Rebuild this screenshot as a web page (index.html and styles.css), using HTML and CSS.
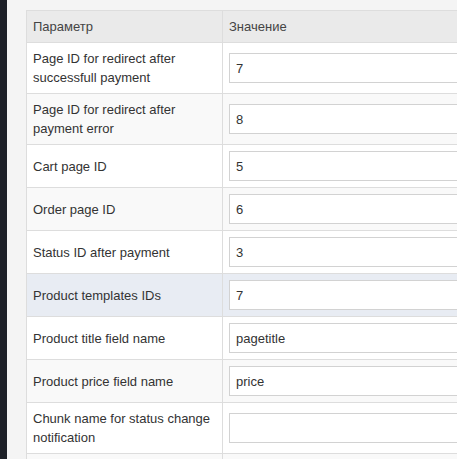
FILE: index.html
```html
<!DOCTYPE html>
<html lang="ru">
<head>
    <meta charset="UTF-8">
    <meta name="viewport" content="width=device-width, initial-scale=1.0">
    <title>Настройки модуля</title>
    <link rel="stylesheet" href="styles.css">
</head>
<body>

    <div class="sidebar"></div>

    <main class="content">
        <!-- Module settings -->
        <table class="settings">
            <tr>
                <th class="col-name">Параметр</th>
                <th>Значение</th>
            </tr>
            <tr>
                <td>Page ID for redirect after successfull payment</td>
                <td><input type="text" value="7"></td>
            </tr>
            <tr>
                <td>Page ID for redirect after payment error</td>
                <td><input type="text" value="8"></td>
            </tr>
            <tr>
                <td>Cart page ID</td>
                <td><input type="text" value="5"></td>
            </tr>
            <tr>
                <td>Order page ID</td>
                <td><input type="text" value="6"></td>
            </tr>
            <tr>
                <td>Status ID after payment</td>
                <td><input type="text" value="3"></td>
            </tr>
            <tr class="active">
                <td>Product templates IDs</td>
                <td><input type="text" value="7"></td>
            </tr>
            <tr>
                <td>Product title field name</td>
                <td><input type="text" value="pagetitle"></td>
            </tr>
            <tr>
                <td>Product price field name</td>
                <td><input type="text" value="price"></td>
            </tr>
            <tr>
                <td>Chunk name for status change notification</td>
                <td><input type="text" value=""></td>
            </tr>
            <tr>
                <td></td>
                <td><input type="text" value=""></td>
            </tr>
        </table>
    </main>

</body>
</html>
```

FILE: styles.css
```css
/* General Styles */
html, body {
    height: 100%;
}

body {
    margin: 0;
    display: flex;
    overflow: hidden;
    background-color: #f4f4f4;
    font-family: "Liberation Sans", Arial, sans-serif;
    font-size: 13px;
    color: #333;
}

.sidebar {
    width: 7px;
    flex-shrink: 0;
    background: #1e2128;
}

.content {
    padding: 10px 0 0 19px;
}

/* Settings table */
.settings {
    width: 640px;
    border-collapse: collapse;
    background: white;
    border: 1px solid #ddd;
}

.settings th,
.settings td {
    padding: 6px;
    line-height: 19px;
    border: 1px solid #ddd;
    text-align: left;
    vertical-align: middle;
}

.settings th {
    background: #eaeaea;
    font-weight: normal;
    color: #444;
}

.col-name {
    width: 183px;
}

.settings tr:nth-child(odd) td {
    background: #f9f9f9;
}

.settings tr.active td {
    background: #e8ecf3;
}

.settings input {
    display: block;
    box-sizing: border-box;
    width: 100%;
    height: 30px;
    margin: 0;
    padding: 4px 6px;
    border: 1px solid #d2d2d2;
    border-radius: 0;
    background: white;
    font-family: inherit;
    font-size: 13px;
    color: #333;
}
```
